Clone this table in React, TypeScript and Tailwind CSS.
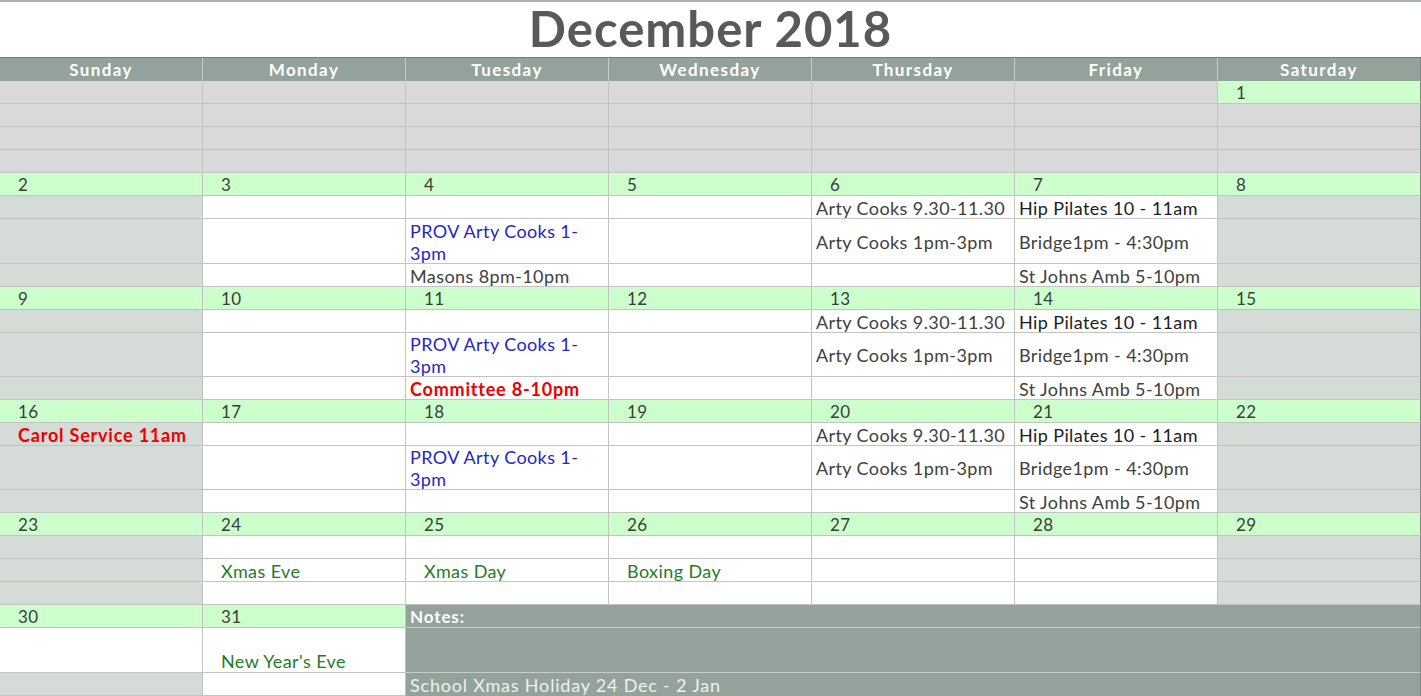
import type { ReactNode } from 'react';

type Tone = 'gray' | 'dark' | 'blue' | 'red' | 'green';

interface Ev {
  text: string;
  tone: Tone;
  indent?: boolean;
}

interface Week {
  days: (number | null)[];
  heights: number[];
  events: (Ev | null)[][];
}

const dayNames = ['Sunday', 'Monday', 'Tuesday', 'Wednesday', 'Thursday', 'Friday', 'Saturday'];

const toneClass: Record<Tone, string> = {
  gray: 'text-[#404040] tracking-[0.4px]',
  dark: 'text-[#1c1c1c] tracking-[0.4px]',
  blue: 'text-[#2626c4] tracking-[0.4px]',
  red: 'text-[#ec0000] font-bold tracking-[0.8px]',
  green: 'text-[#1f7d1f] tracking-[0.4px]'
};

const heightClass: Record<number, string> = {
  23: 'h-[23px]',
  44: 'h-[44px]',
  45: 'h-[45px]'
};

const ac1: Ev = { text: 'Arty Cooks 9.30-11.30', tone: 'gray' };
const hip: Ev = { text: 'Hip Pilates 10 - 11am', tone: 'dark' };
const prov: Ev = { text: 'PROV Arty Cooks 1-\n3pm', tone: 'blue' };
const ac2: Ev = { text: 'Arty Cooks 1pm-3pm', tone: 'gray' };
const bridge: Ev = { text: 'Bridge1pm - 4:30pm', tone: 'gray' };
const sja: Ev = { text: 'St Johns Amb 5-10pm', tone: 'gray' };
const _ = null;

const weeks: Week[] = [
  {
    days: [null, null, null, null, null, null, 1],
    heights: [23, 23, 23],
    events: [
      [_, _, _, _, _, _, _],
      [_, _, _, _, _, _, _],
      [_, _, _, _, _, _, _]
    ]
  },
  {
    days: [2, 3, 4, 5, 6, 7, 8],
    heights: [23, 45, 23],
    events: [
      [_, _, _, _, ac1, hip, _],
      [_, _, prov, _, ac2, bridge, _],
      [_, _, { text: 'Masons 8pm-10pm', tone: 'gray' }, _, _, sja, _]
    ]
  },
  {
    days: [9, 10, 11, 12, 13, 14, 15],
    heights: [23, 44, 23],
    events: [
      [_, _, _, _, ac1, hip, _],
      [_, _, prov, _, ac2, bridge, _],
      [_, _, { text: 'Committee 8-10pm', tone: 'red' }, _, _, sja, _]
    ]
  },
  {
    days: [16, 17, 18, 19, 20, 21, 22],
    heights: [23, 44, 23],
    events: [
      [{ text: 'Carol Service 11am', tone: 'red', indent: true }, _, _, _, ac1, hip, _],
      [_, _, prov, _, ac2, bridge, _],
      [_, _, _, _, _, sja, _]
    ]
  },
  {
    days: [23, 24, 25, 26, 27, 28, 29],
    heights: [23, 23, 23],
    events: [
      [_, _, _, _, _, _, _],
      [
        _,
        { text: 'Xmas Eve', tone: 'green', indent: true },
        { text: 'Xmas Day', tone: 'green', indent: true },
        { text: 'Boxing Day', tone: 'green', indent: true },
        _,
        _,
        _
      ],
      [_, _, _, _, _, _, _]
    ]
  }
];

const font = "font-['Lato','Liberation_Sans',sans-serif]";

function cellBg(weekIdx: number, col: number) {
  if (weekIdx === 0) return 'bg-[#d9d9d9]';
  if (col === 0 || col === 6) return 'bg-[#d5dbd7]';
  return 'bg-white';
}

function Cell({ h, bg, last, children, className = '' }: { h: number; bg: string; last?: boolean; children?: ReactNode; className?: string }) {
  return (
    <div
      className={`${heightClass[h]} ${bg} flex items-center overflow-hidden border-b border-r ${
        last ? 'border-r-[#7d8c83]' : 'border-r-[#c3c3c3]'
      } border-b-[#c3c3c3] ${className}`}
    >
      {children}
    </div>
  );
}

function EventText({ ev }: { ev: Ev }) {
  return (
    <span
      className={`${toneClass[ev.tone]} ${ev.indent ? 'pl-[18px]' : 'pl-[4px]'} whitespace-pre leading-[22px] text-[18px] pt-[1px]`}
    >
      {ev.text}
    </span>
  );
}

function DayNum({ n }: { n: number }) {
  return <span className="pl-[18px] pt-[1px] text-[17px] tracking-[0.5px] text-[#3c3c3c]">{n}</span>;
}

function WeekBlock({ week, idx }: { week: Week; idx: number }) {
  return (
    <div className="grid grid-cols-[203px_repeat(6,203px)]">
      {week.days.map((d, col) => (
        <Cell key={`d${col}`} h={23} bg={d ? 'bg-[#ccffcc]' : 'bg-[#d9d9d9]'} last={col === 6}>
          {d ? <DayNum n={d} /> : null}
        </Cell>
      ))}
      {week.events.map((row, r) =>
        row.map((ev, col) => (
          <Cell key={`e${r}-${col}`} h={week.heights[r]} bg={cellBg(idx, col)} last={col === 6}>
            {ev ? <EventText ev={ev} /> : null}
          </Cell>
        ))
      )}
    </div>
  );
}

export default function App() {
  return (
    <div className={`w-[1421px] h-[696px] overflow-hidden bg-white ${font}`}>
      <div className="h-[57px] border-t-2 border-[#a8b2b8] flex items-center justify-center">
        <h1 className="text-[49px] font-bold text-[#595959] leading-none tracking-[1px] pb-[2px]">December 2018</h1>
      </div>
      <div className="grid grid-cols-[203px_repeat(6,203px)] border-t border-[#6f7f76] bg-[#93a29a]">
        {dayNames.map((n, i) => (
          <div
            key={n}
            className={`h-[23px] flex items-center justify-center pt-[1px] text-[17px] font-bold tracking-[1.4px] text-white border-r ${
              i === 6 ? 'border-[#7d8c83]' : 'border-[#c4cdc7]'
            }`}
          >
            {n}
          </div>
        ))}
      </div>
      {weeks.map((w, i) => (
        <WeekBlock key={i} week={w} idx={i} />
      ))}
      <div className="grid grid-cols-[203px_203px_1015px]">
        <Cell h={23} bg="bg-[#ccffcc]">
          <DayNum n={30} />
        </Cell>
        <Cell h={23} bg="bg-[#ccffcc]">
          <DayNum n={31} />
        </Cell>
        <div className="row-span-3 flex flex-col bg-[#93a29a] border-r border-[#7d8c83]">
          <div className="h-[23px] flex items-center border-b border-[#c6cec9] pl-[4px] pt-[1px] text-[17px] font-bold tracking-[0.9px] text-white">
            Notes:
          </div>
          <div className="h-[45px] border-b border-[#c6cec9]" />
          <div className="h-[23px] flex items-center pl-[4px] pt-[2px] text-[18px] tracking-[0.8px] text-[#eef1ee] whitespace-nowrap">
            School Xmas Holiday 24 Dec - 2 Jan
          </div>
        </div>
        <Cell h={45} bg="bg-white" />
        <Cell h={45} bg="bg-white" className="!items-end">
          <EventText ev={{ text: "New Year's Eve", tone: 'green', indent: true }} />
        </Cell>
        <Cell h={23} bg="bg-[#d5dbd7]" />
        <Cell h={23} bg="bg-white" />
      </div>
    </div>
  );
}
